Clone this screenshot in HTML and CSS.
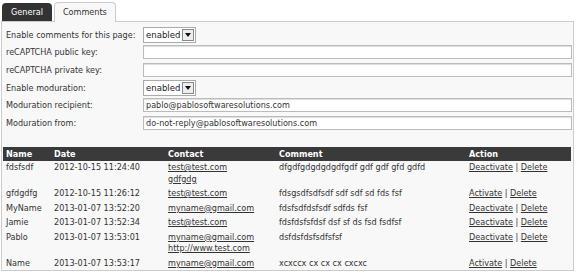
FILE: index.html
```html
<!DOCTYPE html>
<html lang="en">
<head>
  <meta charset="UTF-8">
  <title>Comments settings</title>
  <link rel="stylesheet" href="styles.css">
</head>
<body>

  <ul class="tabs">
    <li class="tab">General</li>
    <li class="tab active">Comments</li>
  </ul>

  <div class="panel">
    <table class="settings">
      <tr>
        <td class="label">Enable comments for this page:</td>
        <td><span class="select"><span class="select-value">enabled</span><span class="select-btn"></span></span></td>
      </tr>
      <tr>
        <td class="label">reCAPTCHA public key:</td>
        <td><input type="text" class="field"></td>
      </tr>
      <tr>
        <td class="label">reCAPTCHA private key:</td>
        <td><input type="text" class="field"></td>
      </tr>
      <tr>
        <td class="label">Enable moduration:</td>
        <td><span class="select"><span class="select-value">enabled</span><span class="select-btn"></span></span></td>
      </tr>
      <tr>
        <td class="label">Moduration recipient:</td>
        <td><input type="text" class="field" value="pablo@pablosoftwaresolutions.com"></td>
      </tr>
      <tr>
        <td class="label">Moduration from:</td>
        <td><input type="text" class="field" value="do-not-reply@pablosoftwaresolutions.com"></td>
      </tr>
    </table>

    <table class="comments">
      <colgroup>
        <col class="c-name">
        <col class="c-date">
        <col class="c-contact">
        <col class="c-comment">
        <col class="c-action">
      </colgroup>
      <thead>
        <tr>
          <th>Name</th>
          <th>Date</th>
          <th>Contact</th>
          <th>Comment</th>
          <th>Action</th>
        </tr>
      </thead>
      <tbody>
        <tr>
          <td>fdsfsdf</td>
          <td>2012-10-15 11:24:40</td>
          <td><a href="#">test@test.com</a><br><a href="#">gdfgdg</a></td>
          <td>dfgdfgdgdgdgdfgdf gdf gdf gfd gdfd</td>
          <td><a href="#">Deactivate</a> | <a href="#">Delete</a></td>
        </tr>
        <tr>
          <td>gfdgdfg</td>
          <td>2012-10-15 11:26:12</td>
          <td><a href="#">test@test.com</a></td>
          <td>fdsgsdfsdfsdf sdf sdf sd fds fsf</td>
          <td><a href="#">Activate</a> | <a href="#">Delete</a></td>
        </tr>
        <tr>
          <td>MyName</td>
          <td>2013-01-07 13:52:20</td>
          <td><a href="#">myname@gmail.com</a></td>
          <td>fdsfsdfdsfsdf sdfds fsf</td>
          <td><a href="#">Deactivate</a> | <a href="#">Delete</a></td>
        </tr>
        <tr>
          <td>Jamie</td>
          <td>2013-01-07 13:52:34</td>
          <td><a href="#">test@test.com</a></td>
          <td>fdsfdsfsfdsf dsf sf ds fsd fsdfsf</td>
          <td><a href="#">Deactivate</a> | <a href="#">Delete</a></td>
        </tr>
        <tr>
          <td>Pablo</td>
          <td>2013-01-07 13:53:01</td>
          <td><a href="#">myname@gmail.com</a><br><a href="#">http://www.test.com</a></td>
          <td>dsfdsfdsfsdfsfsf</td>
          <td><a href="#">Deactivate</a> | <a href="#">Delete</a></td>
        </tr>
        <tr>
          <td>Name</td>
          <td>2013-01-07 13:53:17</td>
          <td><a href="#">myname@gmail.com</a></td>
          <td>xcxccx cx cx cx cxcxc</td>
          <td><a href="#">Activate</a> | <a href="#">Delete</a></td>
        </tr>
      </tbody>
    </table>
  </div>

</body>
</html>
```

FILE: styles.css
```css
/* General Reset */
body, html {
  margin: 0;
  padding: 0;
  font-family: Tahoma, "DejaVu Sans Condensed", "DejaVu Sans", sans-serif;
  font-size: 9px;
  color: #333;
  background: #fff;
}

/* Tabs */
.tabs {
  list-style-type: none;
  margin: 0;
  padding: 2px 0 0 2px;
  display: flex;
  gap: 2px;
  align-items: flex-end;
  height: 19px;
  position: relative;
  z-index: 1;
}

.tab {
  height: 18px;
  line-height: 18px;
  padding: 0 9px;
  background: #333;
  color: #fff;
  border-radius: 4px 4px 0 0;
}

.tab.active {
  height: 19px;
  line-height: 19px;
  background: #f8f8f8;
  color: #333;
  border: 1px solid #ccc;
  border-bottom: none;
  padding: 0 8px;
  margin-bottom: -1px;
}

/* Panel */
.panel {
  margin: 0 2px 0 1px;
  height: 250px;
  border: 1px solid #ccc;
  background: #f8f8f8;
  padding: 4px 1px 0 1px;
  box-sizing: border-box;
}

/* Settings form */
.settings {
  width: 100%;
  border-collapse: collapse;
}

.settings td {
  padding: 0;
  height: 17.6px;
}

.settings .label {
  width: 137px;
  padding-left: 3px;
}

.field {
  display: block;
  width: 100%;
  height: 14px;
  box-sizing: border-box;
  margin: 0;
  padding: 0 2px;
  border: 1px solid #bbb;
  box-shadow: inset 0 1px 1px #ddd;
  background: #fff;
  font: inherit;
  color: #333;
}

.select {
  display: inline-flex;
  align-items: center;
  height: 14px;
  border: 1px solid #aaa;
  background: #fff;
  padding: 0 1px 0 2px;
  vertical-align: middle;
}

.select-value {
  padding-right: 2px;
  color: #222;
  font-size: 9.5px;
}

.select-btn {
  width: 10px;
  height: 10px;
  border: 1px solid #888;
  background: #eee;
  position: relative;
}

.select-btn::after {
  content: "";
  position: absolute;
  left: 2px;
  top: 3px;
  border-left: 3px solid transparent;
  border-right: 3px solid transparent;
  border-top: 4px solid #111;
}

/* Comments table */
.comments {
  margin-top: 15px;
  width: 568px;
  border-collapse: collapse;
  table-layout: fixed;
}

.c-name { width: 48px; }
.c-date { width: 114px; }
.c-contact { width: 111px; }
.c-comment { width: 190px; }
.c-action { width: 105px; }

.comments th {
  background: #3a3a3a;
  color: #fff;
  text-align: left;
  font-weight: bold;
  padding: 0 3px;
  height: 14px;
  line-height: 14px;
}

.comments td {
  vertical-align: top;
  padding: 1.5px 3px;
  line-height: 11.5px;
  white-space: nowrap;
}

.comments a {
  color: #333;
  text-decoration: underline;
}
```
